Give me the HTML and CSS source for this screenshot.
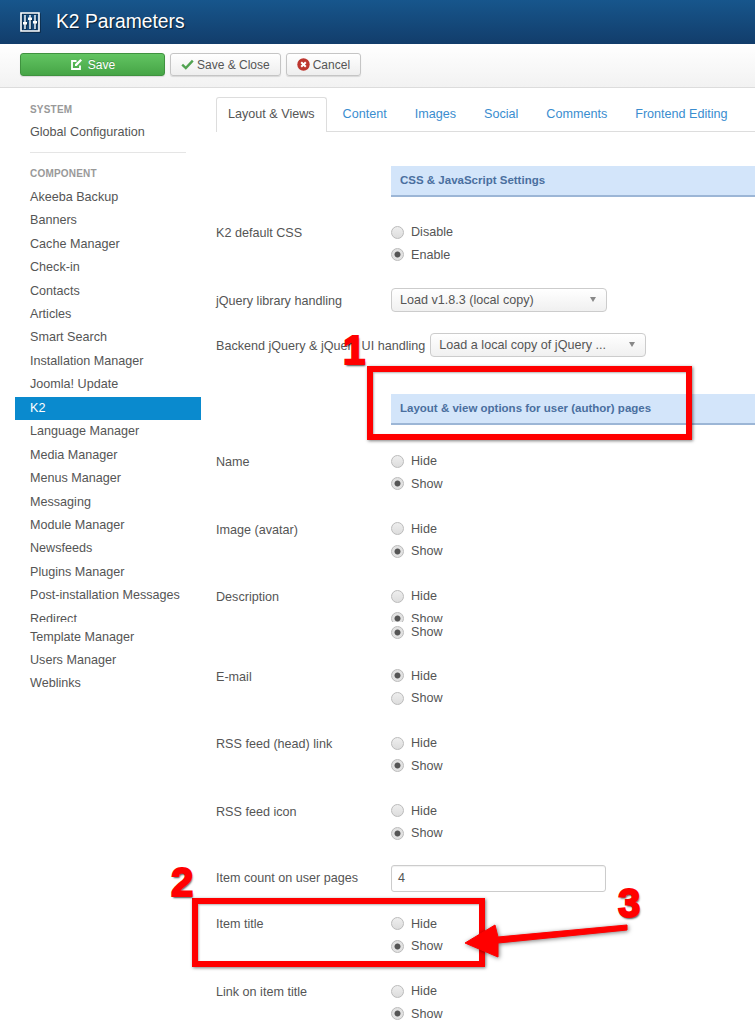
FILE: index.html
```html
<!DOCTYPE html>
<html lang="en">

<head>
    <meta charset="UTF-8">
    <title>K2 Parameters</title>
    <link rel="stylesheet" href="styles.css">
</head>

<body>
    <header class="titlebar">
        <svg class="title-icon" width="20" height="20" viewBox="0 0 20 20">
            <path d="M1 1h18v18H1z" fill="none" stroke="#fff" stroke-width="1.6" />
            <path d="M5 3v14M10 3v14M15 3v14" stroke="#fff" stroke-width="1.4" />
            <path d="M3 10h4v2.4H3zM8 5.5h4v2.4H8zM13 9h4v2.4h-4z" fill="#fff" />
        </svg>
        <h1>K2 Parameters</h1>
    </header>

    <div class="toolbar">
        <button class="btn btn-save">
            <svg width="13" height="13" viewBox="0 0 13 13">
                <path d="M10 7.5V11H2V3h4.5" fill="none" stroke="#fff" stroke-width="1.8" />
                <path d="M5 6.3 10.4 1 12 2.6 6.7 8H5z" fill="#fff" />
            </svg>
            Save
        </button>
        <button class="btn">
            <svg width="13" height="11" viewBox="0 0 13 11">
                <path d="M1.2 5.6 4.8 9 11.8 1.6" fill="none" stroke="#51a351" stroke-width="2.4" />
            </svg>
            Save &amp; Close
        </button>
        <button class="btn">
            <svg width="13" height="13" viewBox="0 0 13 13">
                <circle cx="6.5" cy="6.5" r="6.2" fill="#bd362f" />
                <path d="M4.2 4.2l4.6 4.6M8.8 4.2 4.2 8.8" stroke="#fff" stroke-width="2" />
            </svg>
            Cancel
        </button>
    </div>

    <div class="upper">
        <nav class="sidebar">
            <div class="side-head">SYSTEM</div>
            <a class="side-link">Global Configuration</a>
            <hr class="side-rule">
            <div class="side-head">COMPONENT</div>
            <a class="side-link">Akeeba Backup</a>
            <a class="side-link">Banners</a>
            <a class="side-link">Cache Manager</a>
            <a class="side-link">Check-in</a>
            <a class="side-link">Contacts</a>
            <a class="side-link">Articles</a>
            <a class="side-link">Smart Search</a>
            <a class="side-link">Installation Manager</a>
            <a class="side-link">Joomla! Update</a>
            <a class="side-link active">K2</a>
            <a class="side-link">Language Manager</a>
            <a class="side-link">Media Manager</a>
            <a class="side-link">Menus Manager</a>
            <a class="side-link">Messaging</a>
            <a class="side-link">Module Manager</a>
            <a class="side-link">Newsfeeds</a>
            <a class="side-link">Plugins Manager</a>
            <a class="side-link">Post-installation Messages</a>
            <a class="side-link">Redirect</a>
        </nav>

        <main class="content">
            <ul class="tabs">
                <li class="tab current">Layout &amp; Views</li>
                <li class="tab">Content</li>
                <li class="tab">Images</li>
                <li class="tab">Social</li>
                <li class="tab">Comments</li>
                <li class="tab">Frontend Editing</li>
            </ul>

            <h2 class="section first">CSS &amp; JavaScript Settings</h2>

            <div class="row">
                <label class="field-label">K2 default CSS</label>
                <div class="options">
                    <label class="option"><input type="radio" name="css"> Disable</label>
                    <label class="option"><input type="radio" name="css" checked> Enable</label>
                </div>
            </div>
            <div class="row tight">
                <label class="field-label">jQuery library handling</label>
                <div class="select">Load v1.8.3 (local copy)</div>
            </div>
            <div class="row tight">
                <label class="field-label">Backend jQuery &amp; jQuery UI handling</label>
                <div class="select">Load a local copy of jQuery ...</div>
            </div>

            <h2 class="section">Layout &amp; view options for user (author) pages</h2>

            <div class="row">
                <label class="field-label">Name</label>
                <div class="options">
                    <label class="option"><input type="radio" name="name"> Hide</label>
                    <label class="option"><input type="radio" name="name" checked> Show</label>
                </div>
            </div>
            <div class="row">
                <label class="field-label">Image (avatar)</label>
                <div class="options">
                    <label class="option"><input type="radio" name="avatar"> Hide</label>
                    <label class="option"><input type="radio" name="avatar" checked> Show</label>
                </div>
            </div>
            <div class="row">
                <label class="field-label">Description</label>
                <div class="options">
                    <label class="option"><input type="radio" name="desc"> Hide</label>
                    <label class="option"><input type="radio" name="desc" checked> Show</label>
                </div>
            </div>
        </main>
    </div>

    <div class="lower">
        <nav class="sidebar sidebar-tail">
            <a class="side-link">Template Manager</a>
            <a class="side-link">Users Manager</a>
            <a class="side-link">Weblinks</a>
        </nav>

        <main class="content">
            <div class="row">
                <span class="field-label"></span>
                <label class="option option-cut"><input type="radio" name="desc2" checked> Show</label>
            </div>
            <div class="row">
                <label class="field-label">E-mail</label>
                <div class="options">
                    <label class="option"><input type="radio" name="mail" checked> Hide</label>
                    <label class="option"><input type="radio" name="mail"> Show</label>
                </div>
            </div>
            <div class="row">
                <label class="field-label">RSS feed (head) link</label>
                <div class="options">
                    <label class="option"><input type="radio" name="rss" > Hide</label>
                    <label class="option"><input type="radio" name="rss" checked> Show</label>
                </div>
            </div>
            <div class="row rss-icon">
                <label class="field-label">RSS feed icon</label>
                <div class="options">
                    <label class="option"><input type="radio" name="rssicon"> Hide</label>
                    <label class="option"><input type="radio" name="rssicon" checked> Show</label>
                </div>
            </div>
            <div class="row count">
                <label class="field-label">Item count on user pages</label>
                <div class="text-input">4</div>
            </div>
            <div class="row">
                <label class="field-label">Item title</label>
                <div class="options">
                    <label class="option"><input type="radio" name="title"> Hide</label>
                    <label class="option"><input type="radio" name="title" checked> Show</label>
                </div>
            </div>
            <div class="row">
                <label class="field-label">Link on item title</label>
                <div class="options">
                    <label class="option"><input type="radio" name="link"> Hide</label>
                    <label class="option"><input type="radio" name="link" checked> Show</label>
                </div>
            </div>
        </main>
    </div>

    <!-- annotations drawn over the screenshot -->
    <div class="mark mark-box-1"></div>
    <div class="mark mark-box-2"></div>
    <span class="mark-num num-1">1</span>
    <span class="mark-num num-2">2</span>
    <span class="mark-num num-3">3</span>
    <svg class="mark-arrow" width="175" height="45" viewBox="0 0 175 45">
        <path d="M2 20 32 2 35 14 164 2 164 7 35 20 35 34z" fill="#f00" stroke="#f00" stroke-width="1" />
    </svg>
</body>

</html>
```

FILE: styles.css
```css
* {
    box-sizing: border-box;
}

html,
body {
    height: 1024px;
    overflow: hidden;
}

body {
    position: relative;
    margin: 0;
    background: #fff;
    color: #555;
    font-family: "Liberation Sans", Arial, sans-serif;
    font-size: 12.6px;
}

.titlebar {
    display: flex;
    align-items: center;
    height: 44px;
    padding-left: 20px;
    background: linear-gradient(#17568c, #123d6b);
}

.titlebar h1 {
    margin: 0 0 0 16px;
    color: #fff;
    font-size: 19.3px;
    font-weight: normal;
    text-shadow: 1px 1px 1px rgba(0, 0, 0, 0.6);
}

.title-icon {
    filter: drop-shadow(1px 1px 0 rgba(0, 0, 0, 0.4));
}

.toolbar {
    display: flex;
    gap: 5px;
    height: 44px;
    padding: 9px 20px 0;
    background: linear-gradient(#fff, #f2f2f2);
    border-bottom: 1px solid #dcdcdc;
}

.btn {
    display: flex;
    align-items: center;
    justify-content: center;
    gap: 3px;
    height: 23px;
    padding: 0 10px;
    background: linear-gradient(#fff, #eee);
    border: 1px solid #c5c5c5;
    border-radius: 3px;
    box-shadow: 0 1px 1px rgba(0, 0, 0, 0.12);
    color: #555;
    font-family: inherit;
    font-size: 12px;
}

.btn-save {
    width: 145px;
    gap: 5px;
    background: linear-gradient(#62c462, #46a546);
    border-color: #3f923f;
    color: #fff;
    text-shadow: 0 -1px 0 rgba(0, 0, 0, 0.2);
}

.upper {
    display: flex;
    height: 534px;
    overflow: hidden;
}

.lower {
    display: flex;
    height: 402px;
}

.sidebar {
    flex: none;
    width: 186px;
    margin: 0 15px;
    padding-top: 9.5px;
}

.sidebar-tail {
    padding-top: 3.5px;
}

.side-head {
    height: 23.44px;
    padding-left: 15px;
    color: #999;
    font-size: 10px;
    font-weight: bold;
    letter-spacing: 0.2px;
    line-height: 23.44px;
}

.side-link {
    display: block;
    height: 23.44px;
    padding-left: 15px;
    line-height: 23.44px;
}

.side-link.active {
    background: #0a8ace;
    color: #fff;
}

.side-rule {
    width: 156px;
    margin: 8px 0 9px 15px;
    border: 0;
    border-top: 1px solid #e5e5e5;
}

.content {
    flex: 1;
    min-width: 0;
}

.tabs {
    display: flex;
    margin: 9px 0 0;
    padding: 0;
    list-style: none;
    border-bottom: 1px solid #ddd;
}

.tab {
    height: 34px;
    margin-right: 4px;
    padding: 0 12px;
    color: #3a8dcf;
    line-height: 35px;
    white-space: nowrap;
}

.tab.current {
    height: 35px;
    margin-bottom: -1px;
    background: #fff;
    border: 1px solid #ddd;
    border-bottom: 0;
    border-radius: 3px 3px 0 0;
    color: #555;
    line-height: 33px;
    padding: 0 11px;
}

.section {
    height: 31px;
    margin: 37px 0 24.75px 175px;
    padding-left: 9px;
    background: #d3e5fa;
    border-bottom: 2px solid #9cb6d6;
    color: #4a6f9f;
    font-size: 11.5px;
    font-weight: bold;
    line-height: 29px;
}

.section.first {
    margin-top: 34px;
    margin-bottom: 23.75px;
}

.row {
    display: flex;
    margin-bottom: 22.5px;
}

.row.tight {
    align-items: center;
    margin-bottom: 21px;
}

.field-label {
    min-width: 175px;
    padding-top: 1px;
    padding-right: 5px;
    line-height: 22.5px;
}

.options {
    display: flex;
    flex-direction: column;
}

.option {
    display: flex;
    align-items: center;
    gap: 7px;
    height: 22.5px;
}

.option-cut {
    height: 20px;
}

.option input {
    appearance: none;
    width: 13px;
    height: 13px;
    margin: 0;
    background: linear-gradient(#eee, #ddd);
    border: 1px solid #bbb;
    border-radius: 50%;
}

.option input:checked {
    background: radial-gradient(circle, #555 0 2.6px, #e2e2e2 3.4px);
}

.select {
    position: relative;
    width: 216px;
    height: 24px;
    padding-left: 8px;
    background: linear-gradient(#fff, #f0f0f0);
    border: 1px solid #ccc;
    border-radius: 4px;
    line-height: 22px;
}

.select::after {
    content: "";
    position: absolute;
    top: 8px;
    right: 10px;
    border: 3.5px solid transparent;
    border-top: 5px solid #888;
    border-bottom: 0;
}

.row.count {
    align-items: center;
    margin-bottom: 20.75px;
}

.row.rss-icon {
    margin-bottom: 20px;
}

.text-input {
    width: 215px;
    height: 27px;
    padding-left: 6px;
    border: 1px solid #ccc;
    border-radius: 3px;
    box-shadow: inset 0 1px 1px rgba(0, 0, 0, 0.06);
    line-height: 25px;
}

.mark {
    position: absolute;
    border: 6px solid #f00;
    box-shadow: 1px 1px 3px rgba(0, 0, 0, 0.5), inset 1px 1px 2px rgba(0, 0, 0, 0.3);
}

.mark-box-1 {
    top: 366px;
    left: 367px;
    width: 325px;
    height: 74px;
}

.mark-box-2 {
    top: 898px;
    left: 192px;
    width: 293px;
    height: 69px;
}

.mark-num {
    position: absolute;
    color: #f00;
    font-family: "Liberation Sans Narrow", "Liberation Sans", Arial, sans-serif;
    font-size: 40px;
    font-weight: bold;
    line-height: 40px;
    -webkit-text-stroke: 2px #f00;
    text-shadow: 1px 2px 2px rgba(0, 0, 0, 0.7);
}

.num-1 {
    top: 330px;
    left: 343px;
}

.num-2 {
    top: 862px;
    left: 171px;
}

.num-3 {
    top: 883px;
    left: 618px;
}

.mark-arrow {
    position: absolute;
    top: 923px;
    left: 463px;
    filter: drop-shadow(1px 1px 2px rgba(0, 0, 0, 0.5));
}
```
